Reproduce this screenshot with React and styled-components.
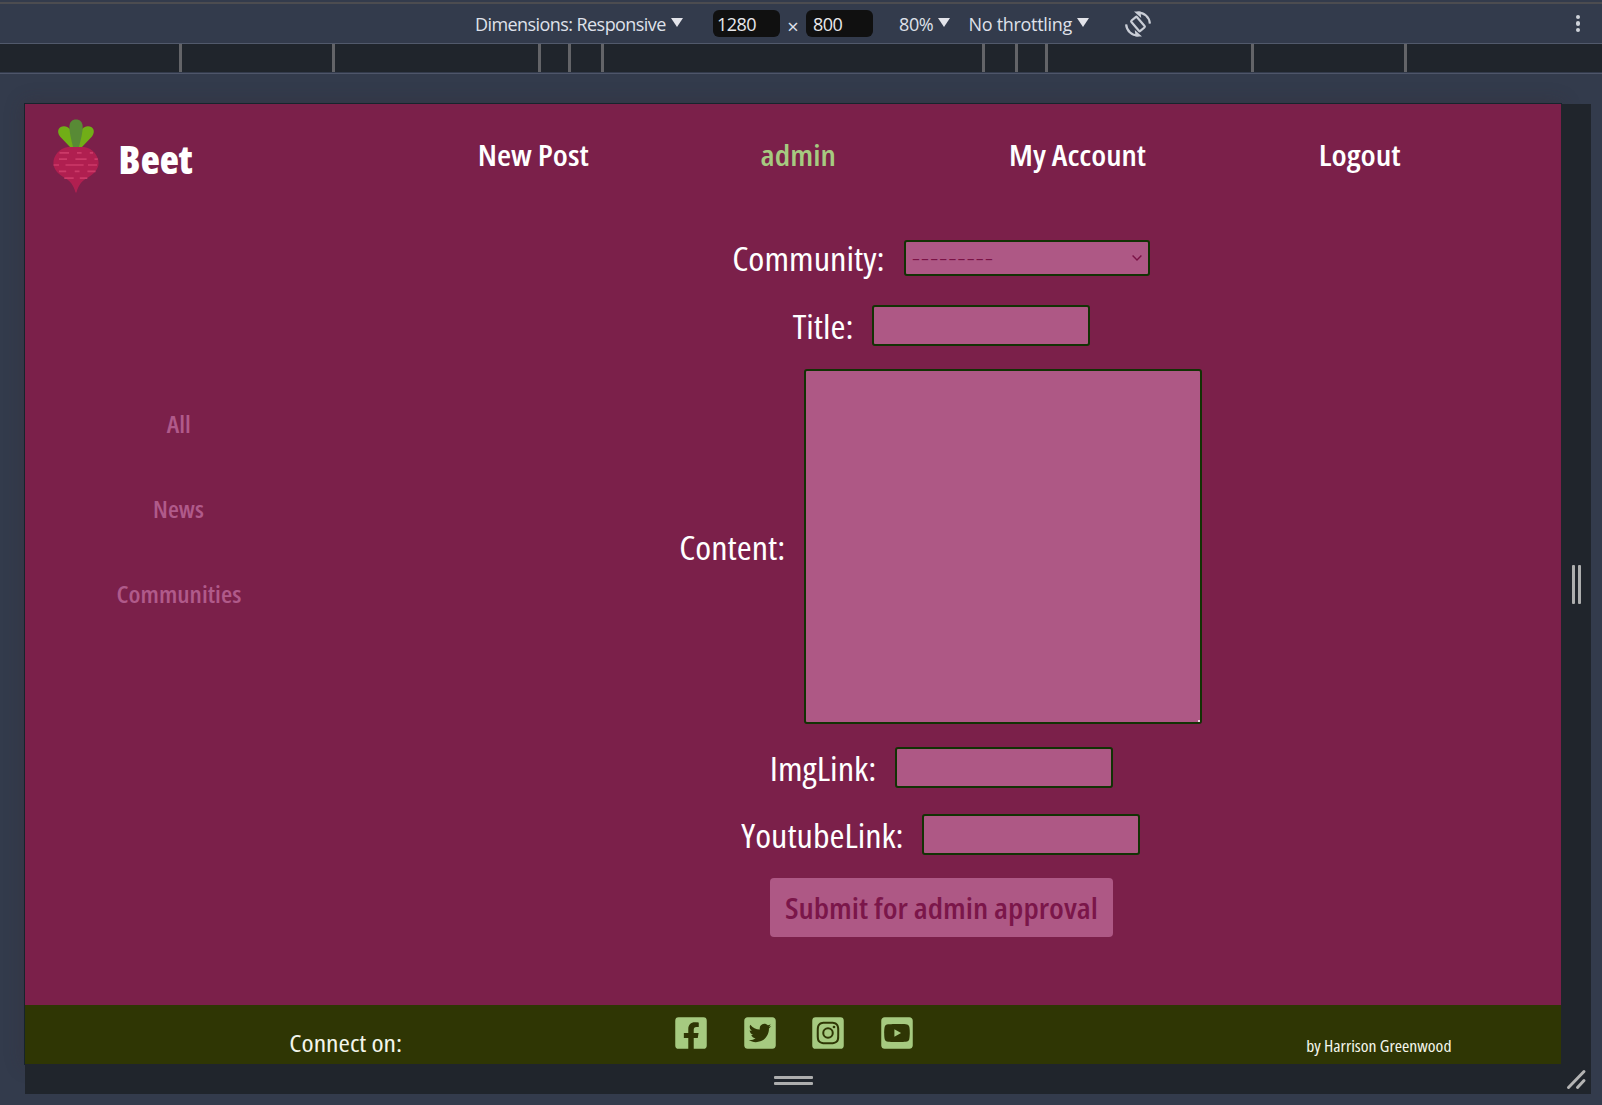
import React from "react";
import styled, { createGlobalStyle } from "styled-components";
import {
  FaFacebookSquare,
  FaTwitterSquare,
  FaInstagramSquare,
  FaYoutubeSquare,
} from "react-icons/fa";

const color = {
  chrome: "#333b4c",
  chromeDark: "#20252c",
  chromeLine: "#525a6c",
  beet: "#7b204a",
  pink: "#ae5885",
  leaf: "#a6ca80",
  moss: "#2f3604",
  fieldEdge: "#123204",
};

const GlobalStyle = createGlobalStyle`
  * { box-sizing: border-box; }
  body {
    margin: 0;
    background: ${color.chrome};
    font-family: "Open Sans", "Noto Sans", sans-serif;
    overflow: hidden;
  }
`;

const Window = styled.div`
  display: flex;
  flex-direction: column;
  width: 1602px;
  height: 1105px;
  background: ${color.chrome};
`;

/* ---------- device toolbar ---------- */

const Toolbar = styled.div`
  display: flex;
  align-items: center;
  height: 44px;
  padding: 4px 18px 0 475px;
  border-bottom: 1px solid ${color.chromeLine};
  background: linear-gradient(#333b4c 2px, #4c4c50 2px, #4c4c50 4px, #333b4c 4px);
  color: #dfe1ea;
  font-size: 18px;
  letter-spacing: -0.57px;
  white-space: nowrap;
`;

const Picker = styled.span`
  display: flex;
  align-items: center;
  gap: 5px;
  width: ${(p) => p.$width}px;
  padding: 1px 0 0 ${(p) => p.$inset || 0}px;
  letter-spacing: ${(p) => p.$tracking}px;
`;

const Caret = styled.span`
  margin-top: -4px;
  border: 6px solid transparent;
  border-top: 9px solid #e3e4ea;
  border-bottom: 0;
`;

const SizeField = styled.span`
  width: 67px;
  height: 27px;
  padding-left: ${(p) => p.$inset}px;
  border-radius: 6px;
  background: #101010;
  color: #e8e8ec;
  line-height: 28px;
`;

const Times = styled.span`
  width: 26px;
  padding-top: 7px;
  text-align: center;
  font-size: 20px;
  line-height: 20px;
  letter-spacing: 0;
`;

const RotateIcon = styled.svg`
  width: 26px;
  height: 26px;
  fill: none;
  stroke: #c9cdd6;
  stroke-width: 2.2;
`;

const MoreDots = styled.span`
  display: flex;
  flex-direction: column;
  gap: 2.4px;
  margin-left: auto;
  margin-right: 4px;
`;

const Dot = styled.i`
  width: 4.4px;
  height: 4.4px;
  border-radius: 50%;
  background: #cfd2da;
`;

const Ruler = styled.div`
  display: flex;
  height: 30px;
  padding-bottom: 1px;
  border-bottom: 1px solid #4f566a;
  background: linear-gradient(${color.chromeDark} 28px, ${color.chrome} 28px);
`;

const RulerStep = styled.i`
  width: ${(p) => p.$width}px;
  height: 28px;
  border-right: 3px solid #636468;
`;

/* ---------- resizable stage ---------- */

const Stage = styled.div`
  display: grid;
  grid-template-columns: 1536px 30px;
  grid-template-rows: 960px 30px;
  padding: 30px 0 0 25px;
`;

const Page = styled.div`
  display: grid;
  grid-template-rows: 100px 801px 59px;
  background: ${color.beet};
  box-shadow: 0 0 0 1px #17242c, 0 0 18px 1px rgba(60, 40, 45, 0.3);
`;

const ResizeBar = styled.div`
  display: flex;
  flex-direction: ${(p) => (p.$vertical ? "row" : "column")};
  align-items: center;
  justify-content: center;
  gap: 3px;
  z-index: 1;
  padding-top: ${(p) => (p.$vertical ? 0 : 2)}px;
  background: ${color.chromeDark};
`;

const Grip = styled.i`
  width: ${(p) => (p.$vertical ? 3 : 39)}px;
  height: ${(p) => (p.$vertical ? 39 : 3)}px;
  border-radius: 1px;
  background: #adaeae;
`;

const ResizeCorner = styled.div`
  z-index: 1;
  background: ${color.chromeDark};
`;

/* ---------- Beet page ---------- */

const Lettering = styled.span`
  display: inline-block;
  font-stretch: 75%;
  white-space: nowrap;
  transform: scaleX(${(p) => p.$widen || 1.1});
`;

const Header = styled.header`
  display: flex;
  align-items: center;
  padding-left: 27.5px;
`;

const Brand = styled.div`
  display: flex;
  align-items: center;
  gap: 21px;
  width: 425px;
  padding-top: 4px;
`;

const BrandName = styled.span`
  padding-top: 5px;
  color: #fff;
  font-size: 38px;
  font-weight: 800;
`;

const Nav = styled.nav`
  display: flex;
  gap: 171.8px;
  padding-top: 1px;
`;

const NavLink = styled.a`
  display: flex;
  justify-content: center;
  width: ${(p) => p.$width}px;
  color: ${(p) => (p.$accent ? color.leaf : "#fff")};
  font-size: 29.4px;
  font-weight: 600;
`;

const Body = styled.main`
  display: grid;
  grid-template-columns: 307px 1218px;
`;

const Sidebar = styled.aside`
  display: flex;
  flex-direction: column;
  align-items: center;
  gap: 53.4px;
  padding-top: 203.5px;
`;

const SidebarLink = styled.a`
  color: #b05a8a;
  font-size: 23.2px;
  font-weight: 600;
  line-height: 32px;
`;

const Form = styled.form`
  display: flex;
  flex-direction: column;
  align-items: center;
  padding-top: 36px;
`;

const Field = styled.div`
  display: flex;
  align-items: center;
  gap: 18.5px;
  height: ${(p) => p.$height}px;
  margin-bottom: ${(p) => p.$after}px;
`;

const Label = styled.label`
  display: flex;
  justify-content: center;
  width: ${(p) => p.$width}px;
  color: #fff;
  font-size: 32.3px;
  font-weight: 500;
  line-height: 36px;
`;

const TextInput = styled.input`
  width: 218px;
  height: 41px;
  border: 2px solid ${color.fieldEdge};
  border-radius: 3px;
  outline: none;
  background: ${color.pink};
`;

const SelectBox = styled.div`
  display: flex;
  align-items: center;
  justify-content: space-between;
  width: 246px;
  height: 36px;
  padding: 0 6px 0 6px;
  border: 2px solid ${color.fieldEdge};
  border-radius: 3px;
  background: ${color.pink};
  color: #7a1246;
`;

const SelectValue = styled.span`
  margin-top: -2px;
  font-size: 26px;
  font-weight: 300;
  letter-spacing: 0.75px;
  line-height: 30px;
`;

const Chevron = styled.svg`
  width: 10px;
  height: 6px;
  fill: none;
  stroke: #7a1246;
  stroke-width: 1.4;
`;

const ContentBox = styled.div`
  position: relative;
  width: 398px;
  height: 355px;

  &::after {
    content: "";
    position: absolute;
    right: 2px;
    bottom: 2px;
    width: 2px;
    height: 2px;
    background: #f0dbe6;
  }
`;

const ContentInput = styled.textarea`
  display: block;
  width: 100%;
  height: 100%;
  border: 2px solid ${color.fieldEdge};
  border-radius: 3px;
  outline: none;
  resize: none;
  background: ${color.pink};
`;

const Submit = styled.button`
  display: flex;
  align-items: center;
  justify-content: center;
  width: 343px;
  height: 59px;
  padding: 0;
  border: 0;
  border-radius: 4px;
  background: ${color.pink};
  color: #7b164a;
  font-family: inherit;
  font-size: 28.3px;
  font-weight: 600;
`;

const Footer = styled.footer`
  display: flex;
  align-items: flex-start;
  background: ${color.moss};
  color: #f4f6ec;
`;

const Connect = styled.span`
  display: flex;
  justify-content: center;
  width: 648px;
  padding: 21px 6px 0 0;
  font-size: 24.3px;
  line-height: 34px;
`;

const Socials = styled.div`
  display: flex;
  gap: 32.5px;
  padding-top: 10px;
  color: ${color.leaf};

  svg {
    width: 36px;
    height: 36px;
  }
`;

const Author = styled.span`
  display: flex;
  justify-content: flex-end;
  flex: 1;
  padding: 28px 112px 0 0;
  font-size: 17px;
  line-height: 25px;
`;

const BeetLogo = () => (
  <svg width="46" height="74" viewBox="0 0 46 74">
    <g fill="#71ae17">
      <path d="M17 28 L7 17.5 C3 12 6 7.3 11 7.3 C16 7.3 18 11 18.5 15 L21 28Z" />
      <path d="M29 28 L39 17.5 C43 12 40 7.3 35 7.3 C30 7.3 28 11 27.5 15 L25 28Z" />
    </g>
    <path
      fill="#588a35"
      d="M20 28 C18.5 22 16.4 13 16.4 8 C16.4 3 19 .4 23 .4 C27 .4 29.7 3 29.7 8 C29.7 13 27.5 22 26 28Z"
    />
    <path
      fill="#b01f50"
      d="M15 28 H31 C40 29 45.6 37 45.6 44 C45.6 50 41 55 35 58.5 C28.5 62 25.5 66 23.5 73.5 H22.5 C20.5 66 17.5 62 11 58.5 C5 55 .4 50 .4 44 C.4 37 6 29 15 28Z"
    />
    <path
      stroke="#cb3a68"
      strokeWidth="1.7"
      fill="none"
      d="M6.5 33.8H16M24 33.8H28.6M36.8 33.8H40M6 40.2H14M22.4 40.2H33.6M41.5 40.2H44.8M.6 46H6M12.5 46H30.6M35 46H44M6 52.4H13.2M21.7 52.4H26.5M34.4 52.4H42.5M11.3 59.2H20.7M26.8 59.2H34.3"
    />
  </svg>
);

const rulerSteps = [182, 153, 206, 30, 33, 381, 33, 30, 206, 153];

export default function App() {
  return (
    <>
      <GlobalStyle />
      <Window>
        <Toolbar>
          <Picker $width={238} $tracking={-0.57}>Dimensions: Responsive<Caret /></Picker>
          <SizeField $inset={4}>1280</SizeField>
          <Times>×</Times>
          <SizeField $inset={7}>800</SizeField>
          <Picker $width={95} $inset={26} $tracking={-0.4}>80%<Caret /></Picker>
          <Picker $width={157} $inset={0.5} $tracking={-0.3}>No throttling<Caret /></Picker>
          <RotateIcon viewBox="0 0 26 26">
            <rect x="6.2" y="9.3" width="13.6" height="7.4" rx="1" transform="rotate(50 13 13)" />
            <path d="M12.5 1.6C19 1.2 24.4 6 24.9 12.6M13.5 24.4C7 24.8 1.6 20 1.1 13.4" />
            <path d="M9 .6H15.5L16.2 7ZM17 25.4H10.5L9.8 19Z" fill="#c9cdd6" stroke="none" />
          </RotateIcon>
          <MoreDots>
            <Dot />
            <Dot />
            <Dot />
          </MoreDots>
        </Toolbar>
        <Ruler>
          {rulerSteps.map((width, i) => (
            <RulerStep key={i} $width={width} />
          ))}
        </Ruler>
        <Stage>
          <Page>
            <Header>
              <Brand>
                <BeetLogo />
                <BrandName><Lettering $widen={1.04}>Beet</Lettering></BrandName>
              </Brand>
              <Nav>
                <NavLink $width={111}><Lettering $widen={1.105}>New Post</Lettering></NavLink>
                <NavLink $width={76} $accent><Lettering $widen={1.1}>admin</Lettering></NavLink>
                <NavLink $width={138}><Lettering $widen={1.095}>My Account</Lettering></NavLink>
                <NavLink $width={83}><Lettering $widen={1.115}>Logout</Lettering></NavLink>
              </Nav>
            </Header>
            <Body>
              <Sidebar>
                <SidebarLink><Lettering $widen={1.11}>All</Lettering></SidebarLink>
                <SidebarLink><Lettering $widen={1.08}>News</Lettering></SidebarLink>
                <SidebarLink><Lettering $widen={1.115}>Communities</Lettering></SidebarLink>
              </Sidebar>
              <Form>
                <Field $height={36} $after={29}>
                  <Label $width={153}><Lettering $widen={1.13}>Community:</Lettering></Label>
                  <SelectBox>
                    <SelectValue>---------</SelectValue>
                    <Chevron viewBox="0 0 10 6"><path d="M.6 .6 5 5 9.4 .6" /></Chevron>
                  </SelectBox>
                </Field>
                <Field $height={41} $after={23}>
                  <Label $width={61}><Lettering $widen={1.12}>Title:</Lettering></Label>
                  <TextInput />
                </Field>
                <Field $height={355} $after={23}>
                  <Label $width={106}><Lettering $widen={1.12}>Content:</Lettering></Label>
                  <ContentBox><ContentInput /></ContentBox>
                </Field>
                <Field $height={41} $after={26}>
                  <Label $width={107}><Lettering $widen={1.13}>ImgLink:</Lettering></Label>
                  <TextInput />
                </Field>
                <Field $height={41} $after={23}>
                  <Label $width={162}><Lettering $widen={1.12}>YoutubeLink:</Lettering></Label>
                  <TextInput />
                </Field>
                <Submit type="button"><Lettering $widen={1.13}>Submit for admin approval</Lettering></Submit>
              </Form>
            </Body>
            <Footer>
              <Connect><Lettering $widen={1.135}>Connect on:</Lettering></Connect>
              <Socials>
                <FaFacebookSquare />
                <FaTwitterSquare />
                <FaInstagramSquare />
                <FaYoutubeSquare />
              </Socials>
              <Author><Lettering $widen={1.04}>by Harrison Greenwood</Lettering></Author>
            </Footer>
          </Page>
          <ResizeBar $vertical>
            <Grip $vertical />
            <Grip $vertical />
          </ResizeBar>
          <ResizeBar>
            <Grip />
            <Grip />
          </ResizeBar>
          <ResizeCorner>
            <svg width="30" height="30" viewBox="0 0 30 30">
              <path d="M7.5 23.5 23 7.5M16.5 23.5 23 16.5" stroke="#b4b4b4" strokeWidth="3" strokeLinecap="round" />
            </svg>
          </ResizeCorner>
        </Stage>
      </Window>
    </>
  );
}
